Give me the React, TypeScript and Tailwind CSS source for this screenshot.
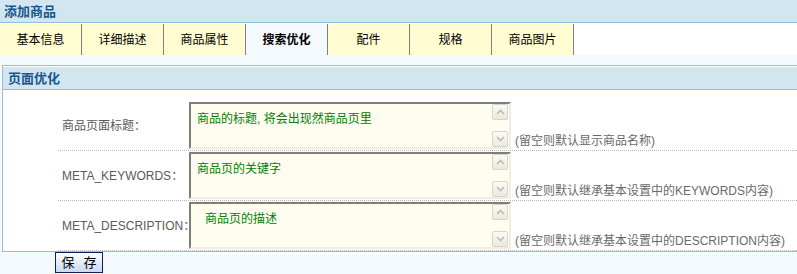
const tabs = ['基本信息', '详细描述', '商品属性', '搜索优化', '配件', '规格', '商品图片'];

const rows = [
    { label: '商品页面标题：', value: '商品的标题, 将会出现然商品页里', hint: '(留空则默认显示商品名称)', indent: false },
    { label: 'META_KEYWORDS：', value: '商品页的关键字', hint: '(留空则默认继承基本设置中的KEYWORDS内容)', indent: false },
    { label: 'META_DESCRIPTION：', value: '商品页的描述', hint: '(留空则默认继承基本设置中的DESCRIPTION内容)', indent: true },
];

function Arrow({ up }: { up?: boolean }) {
    return (
        <div className="w-[16px] h-[16px] rounded-[2px] border border-[#d6d5c9] bg-gradient-to-b from-[#fbfbf7] to-[#ebeadf] flex items-center justify-center">
            <svg width="9" height="6" viewBox="0 0 9 6">
                <path
                    d={up ? 'M1 5 L4.5 1.5 L8 5' : 'M1 1 L4.5 4.5 L8 1'}
                    fill="none"
                    stroke="#bdbcb2"
                    strokeWidth="1.6"
                />
            </svg>
        </div>
    );
}

export default function App() {
    return (
        <div className="w-[797px] h-[274px] overflow-hidden bg-[#f5faff] font-['Liberation_Sans','Noto_Sans_CJK_SC',sans-serif]">
            {/* Title bar */}
            <div className="h-[23px] bg-[#d2e6f1] border-b border-[#8cc0dd] flex items-center pl-[4px]">
                <span className="text-[13px] leading-none font-bold text-[#17578b]">添加商品</span>
            </div>

            {/* Tabs */}
            <div className="h-[32px] bg-white flex pt-[1px]">
                {tabs.map((t, i) => (
                    <div
                        key={t}
                        className={
                            i === 3
                                ? 'w-[82px] border-r border-[#808080] bg-[#f5faff] flex items-center justify-center text-[12px] font-bold text-black'
                                : 'w-[82px] border-r border-[#808080] bg-[#fffcd2] flex items-center justify-center text-[12px] text-black'
                        }
                    >
                        {t}
                    </div>
                ))}
            </div>

            <div className="h-[10px]" />

            {/* Panel */}
            <div className="ml-[2px] border-l border-t border-b border-[#8cc0dd] bg-white">
                <div className="h-[24px] border-t border-white border-b border-b-[#8cc0dd] bg-[#d2e6f1] flex items-center pl-[5px]">
                    <span className="text-[13px] leading-none font-bold text-[#17578b]">页面优化</span>
                </div>

                <div className="pt-[11px] pl-[55px]">
                    {rows.map((r) => (
                        <div key={r.label} className="h-[50px] flex border-b border-dotted border-[#b8b8b8]">
                            <div className="w-[129px] pl-[4px] flex items-center text-[12px] text-[#5a5a5a] whitespace-nowrap">
                                {r.label}
                            </div>
                            <div className="ml-[2px] mt-[1px] w-[322px] h-[47px] flex bg-[#fffdf0] border-2 border-t-[#807f73] border-l-[#807f73] border-r-[#efeee4] border-b-[#efeee4]">
                                <div
                                    className={
                                        r.indent
                                            ? 'flex-1 pl-[14px] pt-[7px] text-[12px] text-[#008000] leading-[16px]'
                                            : 'flex-1 pl-[6px] pt-[7px] text-[12px] text-[#008000] leading-[16px]'
                                    }
                                >
                                    {r.value}
                                </div>
                                <div className="w-[17px] flex flex-col justify-between">
                                    <Arrow up />
                                    <Arrow />
                                </div>
                            </div>
                            <div className="ml-[4px] self-end pb-[2px] text-[12px] leading-[14px] text-[#6a6a6a]">
                                {r.hint}
                            </div>
                        </div>
                    ))}
                </div>
            </div>

            {/* Save button */}
            <button className="ml-[55px] w-[48px] h-[21px] border border-[#0d1f5c] bg-gradient-to-b from-white to-[#c9d9f0] text-[13px] leading-none text-black flex items-center justify-center gap-[9px]">
                <span>保</span>
                <span>存</span>
            </button>
        </div>
    );
}
